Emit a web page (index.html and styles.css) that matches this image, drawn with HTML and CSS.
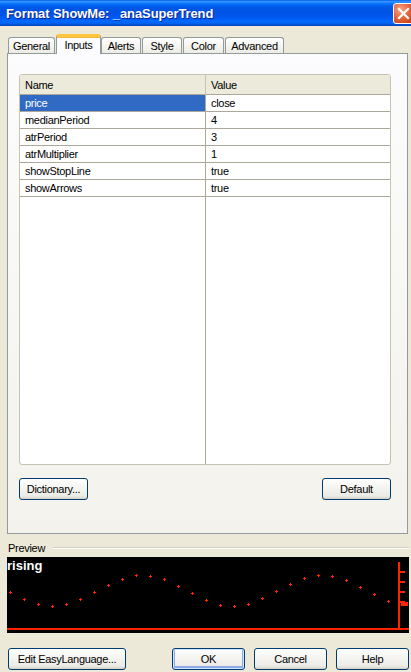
FILE: index.html
```html
<!DOCTYPE html>
<html>
<head>
<meta charset="utf-8">
<title>Format ShowMe</title>
<link rel="stylesheet" href="styles.css">
</head>
<body>
<div class="window">
  <div class="titlebar">
    <span class="title">Format ShowMe: _anaSuperTrend</span>
    <button class="close" aria-label="Close">
      <svg width="13" height="13" viewBox="0 0 13 13"><path d="M2 2L11 11M11 2L2 11" stroke="#fff" stroke-width="2.2" stroke-linecap="square"/></svg>
    </button>
  </div>

  <div class="content">
    <div class="tabs">
      <div class="tab t-general">General</div>
      <div class="tab t-inputs active">Inputs</div>
      <div class="tab t-alerts">Alerts</div>
      <div class="tab t-style">Style</div>
      <div class="tab t-color">Color</div>
      <div class="tab t-advanced">Advanced</div>
    </div>

    <div class="panel">
      <div class="grid">
        <div class="row head">
          <div class="cell">Name</div>
          <div class="cell">Value</div>
        </div>
        <div class="row selected">
          <div class="cell">price</div>
          <div class="cell">close</div>
        </div>
        <div class="row">
          <div class="cell">medianPeriod</div>
          <div class="cell">4</div>
        </div>
        <div class="row">
          <div class="cell">atrPeriod</div>
          <div class="cell">3</div>
        </div>
        <div class="row">
          <div class="cell">atrMultiplier</div>
          <div class="cell">1</div>
        </div>
        <div class="row">
          <div class="cell">showStopLine</div>
          <div class="cell">true</div>
        </div>
        <div class="row">
          <div class="cell">showArrows</div>
          <div class="cell">true</div>
        </div>
        <div class="row filler">
          <div class="cell"></div>
          <div class="cell"></div>
        </div>
      </div>
      <div class="panel-buttons">
        <button class="btn btn-small">Dictionary...</button>
        <button class="btn btn-small">Default</button>
      </div>
    </div>

    <div class="group-label">
      <span>Preview</span>
      <div class="etched"></div>
    </div>

    <div class="preview">
      <svg width="402" height="76" viewBox="0 0 402 76">
        <text x="0" y="13" class="preview-text">rising</text>
        <path fill="none" stroke="#ff2400" stroke-width="1" d="M2 35.5h3M3.5 34v3M16 42.5h3M17.5 41v3M30 47.5h3M31.5 46v3M44 49.5h3M45.5 48v3M58 47.5h3M59.5 46v3M72 42.5h3M73.5 41v3M86 35.5h3M87.5 34v3M100 28.5h3M101.5 27v3M114 22.5h3M115.5 21v3M128 18.5h3M129.5 17v3M142 19.5h3M143.5 18v3M156 22.5h3M157.5 21v3M170 29.5h3M171.5 28v3M184 36.5h3M185.5 35v3M198 43.5h3M199.5 42v3M212 48.5h3M213.5 47v3M226 49.5h3M227.5 48v3M240 47.5h3M241.5 46v3M254 41.5h3M255.5 40v3M268 34.5h3M269.5 33v3M282 27.5h3M283.5 26v3M296 21.5h3M297.5 20v3M310 18.5h3M311.5 17v3M324 19.5h3M325.5 18v3M338 23.5h3M339.5 22v3M352 30.5h3M353.5 29v3M366 37.5h3M367.5 36v3M380 44.5h3M381.5 43v3"/>
        <g fill="#ff2400">
          <rect x="0" y="71" width="402" height="2"/>
          <rect x="391" y="5" width="2" height="67"/>
          <rect x="393" y="14" width="5" height="2"/>
          <rect x="393" y="24" width="5" height="2"/>
          <rect x="393" y="34" width="5" height="2"/>
          <rect x="393" y="44" width="5" height="2"/>
          <rect x="394" y="45" width="7" height="4"/>
        </g>
      </svg>
    </div>

    <div class="footer">
      <button class="btn btn-edit">Edit EasyLanguage...</button>
      <div class="footer-right">
        <button class="btn btn-wide default">OK</button>
        <button class="btn btn-wide">Cancel</button>
        <button class="btn btn-wide">Help</button>
      </div>
    </div>
  </div>
</div>
</body>
</html>
```

FILE: styles.css
```css
html, body {
  margin: 0;
  padding: 0;
}

body {
  width: 411px;
  height: 672px;
  overflow: hidden;
  background: #ece9d8;
  font-family: "Liberation Sans", Arial, sans-serif;
  font-size: 11px;
  letter-spacing: -0.3px;
  color: #000;
}

.window {
  width: 411px;
  height: 672px;
  display: flex;
  flex-direction: column;
  background: #ece9d8;
}

/* Luna caption bar */
.titlebar {
  height: 26px;
  flex: none;
  display: flex;
  align-items: center;
  justify-content: space-between;
  padding-left: 6px;
  background: linear-gradient(to bottom, #0058ee 0%, #3593ff 5%, #288eff 8%, #127dff 12%, #036ffc 16%, #0262ee 22%, #0057e5 30%, #0054e3 40%, #0055eb 60%, #005bf5 72%, #026afe 82%, #0062ef 90%, #0052d6 95%, #0040ab 100%);
}

.title {
  color: #fff;
  font-weight: bold;
  font-size: 13px;
  letter-spacing: -0.1px;
  text-shadow: 1px 1px 0 #0f1f8a;
}

.close {
  width: 21px;
  height: 21px;
  margin-right: -3px;
  padding: 0;
  display: flex;
  align-items: center;
  justify-content: center;
  border: 1px solid #fff;
  border-radius: 3px;
  background: radial-gradient(circle at 35% 30%, #f5a58a 0%, #e5673f 45%, #d24a1f 80%, #c23a12 100%);
}

.content {
  flex: 1;
  display: flex;
  flex-direction: column;
}

/* Tab strip */
.tabs {
  margin-top: 8px;
  height: 19px;
  padding-left: 8px;
  display: flex;
  align-items: flex-end;
  position: relative;
  z-index: 2;
}

.tab {
  box-sizing: border-box;
  height: 16px;
  margin-right: 1px;
  border: 1px solid #919b9c;
  border-bottom: none;
  border-radius: 3px 3px 0 0;
  background: linear-gradient(to bottom, #ffffff 0%, #f7f7f4 40%, #ecebe5 100%);
  display: flex;
  align-items: center;
  justify-content: center;
  padding-top: 1px;
}

.t-general { width: 47px; }
.t-inputs { width: 45px; margin-right: 0; }
.t-alerts { width: 40px; }
.t-style { width: 40px; }
.t-color { width: 41px; }
.t-advanced { width: 59px; }

.tab.active {
  height: 20px;
  margin-bottom: -1px;
  background: #fcfcfe;
  border-top: 3px solid #ffc83c;
  box-shadow: inset 0 1px 0 #f5b540;
  padding-top: 0;
  padding-bottom: 2px;
}

/* Tab page */
.panel {
  box-sizing: border-box;
  width: 401px;
  height: 481px;
  margin-left: 7px;
  border: 1px solid #919b9c;
  background: linear-gradient(to bottom, #fcfcfe 0%, #f8f8f5 40%, #f3f2ec 100%);
  padding: 20px 16px 0 11px;
  display: flex;
  flex-direction: column;
}

.grid {
  box-sizing: border-box;
  width: 372px;
  height: 391px;
  border: 1px solid #c6c3b3;
  border-radius: 3px;
  background: #fff;
  display: flex;
  flex-direction: column;
  overflow: hidden;
}

.row {
  display: grid;
  grid-template-columns: 186px 1fr;
  height: 17px;
  flex: none;
  box-sizing: border-box;
  border-bottom: 1px solid #aca899;
}

.row .cell {
  padding-left: 5px;
  line-height: 16px;
  white-space: nowrap;
}

.row .cell:first-child {
  border-right: 1px solid #aca899;
}

.row.head {
  height: 20px;
  background: #ebeadb;
  border-bottom: 1px solid #aca899;
}

.row.head .cell {
  line-height: 19px;
  padding-top: 1px;
}

.row.head .cell:first-child {
  border-right: 1px solid #c7c5b2;
}

.row.selected .cell:first-child {
  background: #316ac5;
  color: #fff;
}

.row.filler {
  flex: 1;
  border-bottom: none;
}

.panel-buttons {
  margin-top: 13px;
  display: flex;
  justify-content: space-between;
  width: 372px;
}

/* Push buttons */
.btn {
  box-sizing: border-box;
  height: 22px;
  padding: 0;
  border: 1px solid #003c74;
  border-radius: 3px;
  background: linear-gradient(to bottom, #ffffff 0%, #f7f7f4 30%, #ecebe6 85%, #d6d0c5 100%);
  font-family: "Liberation Sans", Arial, sans-serif;
  font-size: 11px;
  letter-spacing: -0.3px;
  color: #000;
}

.btn-small { width: 69px; }
.btn-edit { width: 118px; }
.btn-wide { width: 73px; }

.btn.default {
  box-shadow: inset 0 0 0 1px #cee7ff, inset 0 -1px 0 2px #8ea8ea;
}

.group-label {
  height: 23px;
  margin-left: 8px;
  display: flex;
  align-items: center;
  padding-top: 4px;
  box-sizing: border-box;
}

.etched {
  flex: 1;
  margin-left: 8px;
  margin-right: 2px;
  height: 0;
  border-top: 1px solid #d0d0bf;
  border-bottom: 1px solid #fff;
}

.preview {
  width: 402px;
  height: 76px;
  margin-left: 7px;
  background: #000;
}

.preview svg {
  display: block;
}

.preview-text {
  fill: #fff;
  font-family: "Liberation Sans", Arial, sans-serif;
  font-weight: bold;
  font-size: 13px;
  letter-spacing: 0;
}

.footer {
  margin-top: 15px;
  padding-left: 8px;
  display: flex;
  justify-content: space-between;
  width: 401px;
}

.footer-right {
  display: flex;
  gap: 9px;
}
```
